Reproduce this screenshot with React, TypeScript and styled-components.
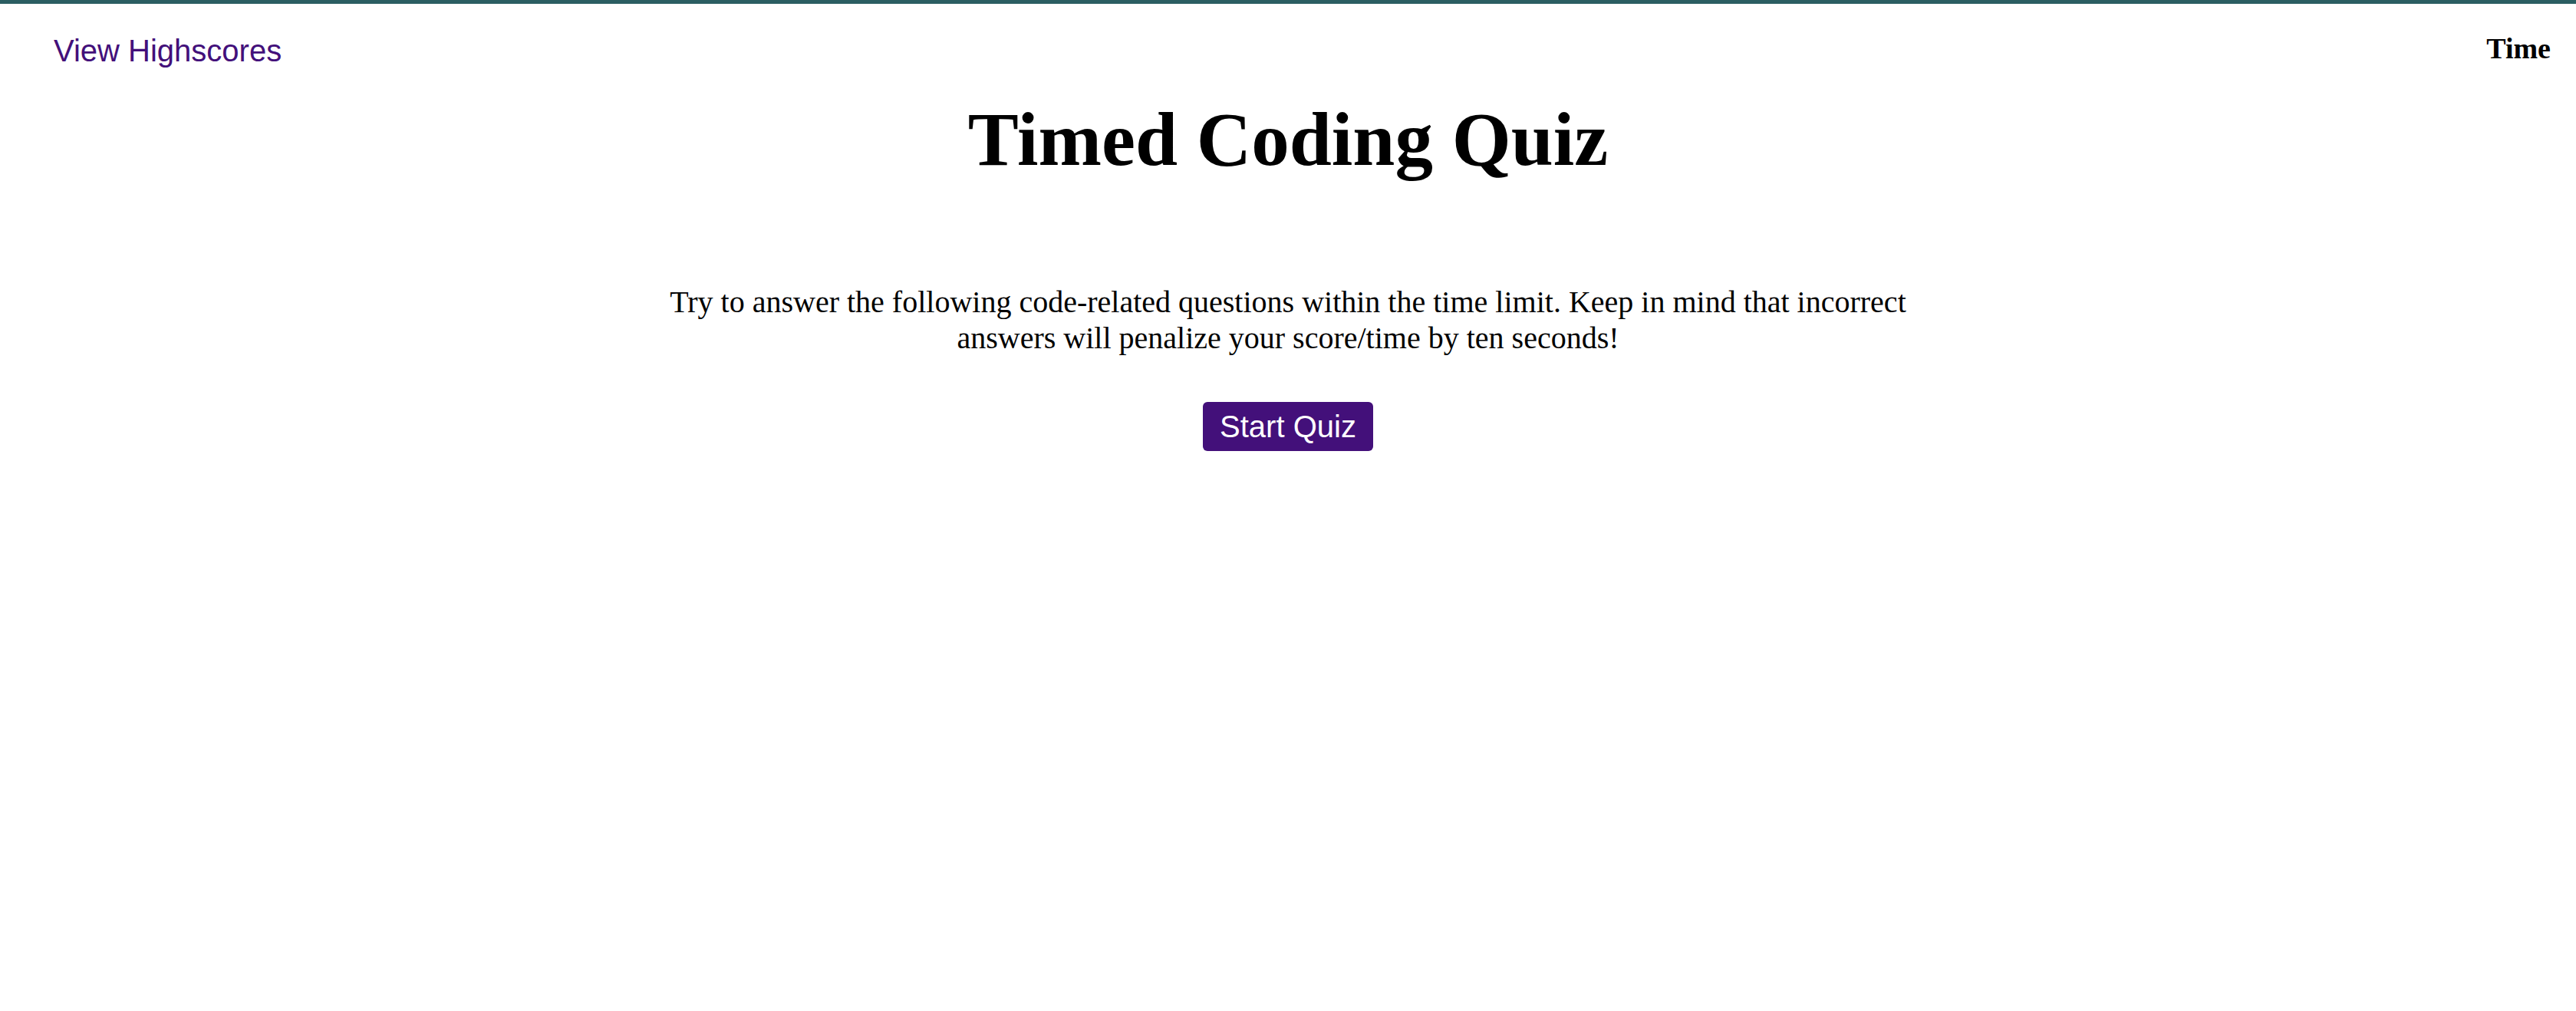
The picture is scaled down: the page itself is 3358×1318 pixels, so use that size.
import React from "react";
import styled, { createGlobalStyle } from "styled-components";

const GlobalStyle = createGlobalStyle`
  html, body {
    margin: 0;
    padding: 0;
    background: #ffffff;
  }
  body {
    font-family: "Liberation Serif", "Times New Roman", serif;
    color: #000000;
  }
`;

const Page = styled.div`
  border-top: 5px solid #2b5e62;
  min-height: 1313px;
  box-sizing: border-box;
`;

const Header = styled.header`
  display: flex;
  justify-content: space-between;
  align-items: flex-start;
  box-sizing: border-box;
  height: 120px;
  padding: 36px 33px 0 70px;
`;

const HighscoresLink = styled.a`
  margin-top: 3px;
  font-family: "Liberation Sans", Arial, sans-serif;
  font-size: 40px;
  color: #43107a;
  text-decoration: none;
  cursor: pointer;
`;

const Timer = styled.div`
  font-family: "Liberation Serif", "Times New Roman", serif;
  font-size: 38px;
  font-weight: bold;
`;

const Main = styled.main`
  display: flex;
  flex-direction: column;
  align-items: center;
`;

const Title = styled.h1`
  margin: 0;
  font-size: 99px;
  font-weight: bold;
  text-align: center;
`;

const Intro = styled.p`
  margin: 132px 0 0;
  width: 50%;
  font-size: 40px;
  text-align: center;
`;

const StartButton = styled.button`
  margin-top: 60px;
  height: 64px;
  padding: 0 22px;
  border: none;
  border-radius: 6px;
  background: #43107a;
  color: #ffffff;
  font-family: "Liberation Sans", Arial, sans-serif;
  font-size: 40px;
  cursor: pointer;
`;

export default function App() {
  return (
    <>
      <GlobalStyle />
      <Page>
        <Header>
          <HighscoresLink>View Highscores</HighscoresLink>
          <Timer>Time</Timer>
        </Header>
        <Main>
          <Title>Timed Coding Quiz</Title>
          <Intro>
            Try to answer the following code-related questions within the time
            limit. Keep in mind that incorrect answers will penalize your
            score/time by ten seconds!
          </Intro>
          <StartButton>Start Quiz</StartButton>
        </Main>
      </Page>
    </>
  );
}
